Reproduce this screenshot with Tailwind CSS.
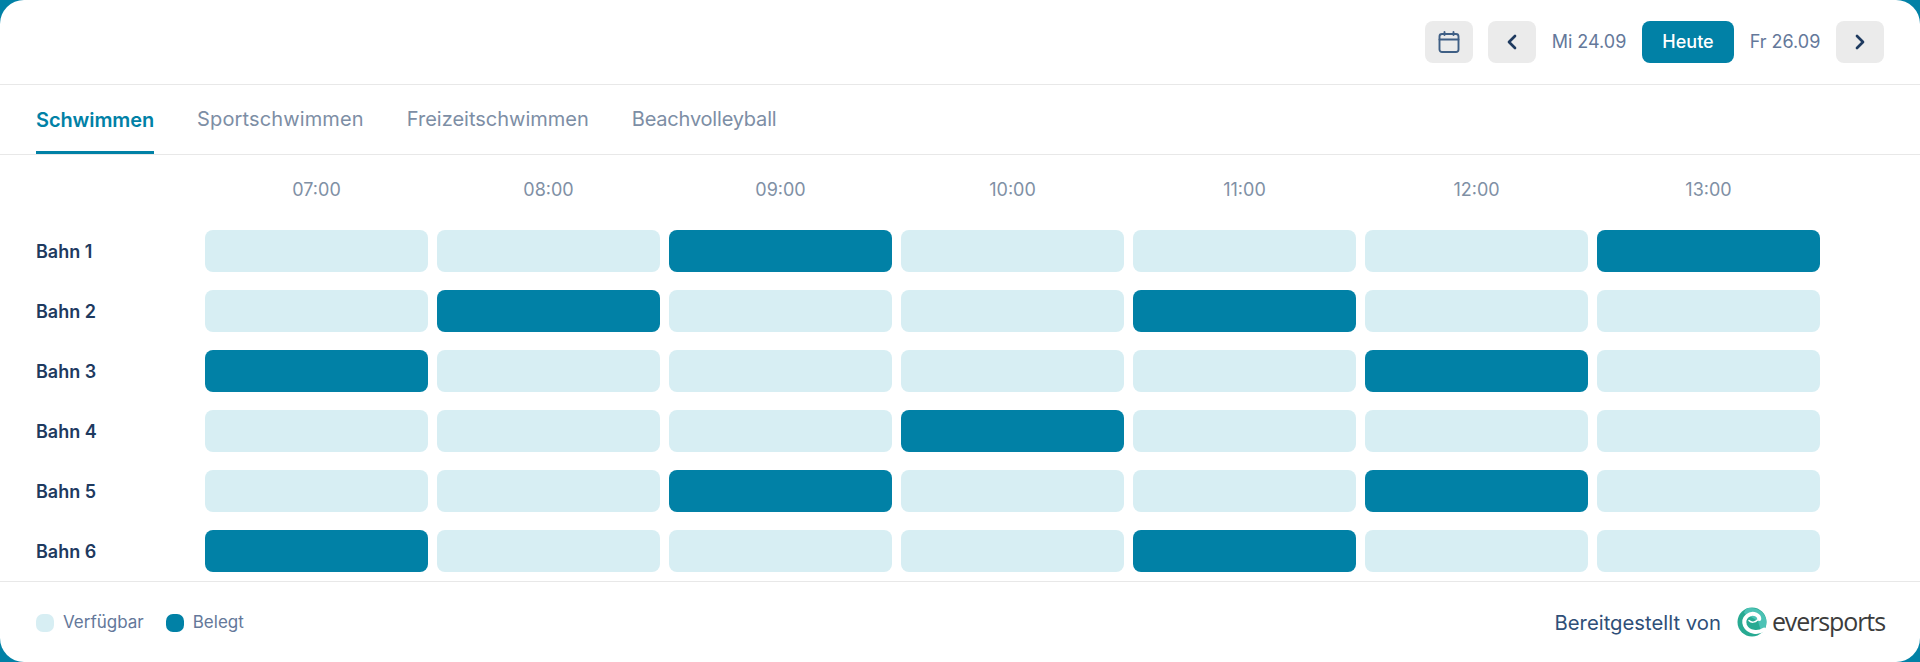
<!DOCTYPE html>
<html lang="de">
<head>
    <meta charset="UTF-8">
    <meta name="viewport" content="width=device-width, initial-scale=1.0">
    <title>Belegung</title>
    <script src="https://cdn.jsdelivr.net/npm/@tailwindcss/browser@4"></script>
</head>
<body class="bg-[#0181a6] font-['Inter',sans-serif]">
    <div class="h-[662px] w-[1920px] bg-white rounded-[24px] flex flex-col overflow-hidden">

        <!-- Kopfzeile -->
        <header class="h-[85px] shrink-0 border-b border-[#e8e8e8] flex items-center justify-end pr-9 pb-px">
            <button class="w-12 h-[42px] rounded-lg bg-[#ebebeb] flex items-center justify-center">
                <svg class="w-[22px] h-[22px] text-[#3f5f85]" viewBox="0 0 22 22" fill="none" stroke="currentColor" stroke-width="1.9" stroke-linecap="round" stroke-linejoin="round">
                    <rect x="1.500" y="3" width="19" height="18" rx="2.500"/>
                    <path d="M1.500 8.500h19M6.500 1v3M15.500 1v3"/>
                </svg>
            </button>
            <button class="ml-[15px] w-12 h-[42px] rounded-lg bg-[#ebebeb] flex items-center justify-center">
                <svg class="w-4 h-4 text-[#1e3a5f]" viewBox="0 0 16 16" fill="none" stroke="currentColor" stroke-width="2.700" stroke-linecap="round" stroke-linejoin="round"><path d="M11 2 5 8l6 6"/></svg>
            </button>
            <span class="w-[106px] text-center text-[18px] text-[#64789a]">Mi 24.09</span>
            <button class="w-[92px] h-[42px] rounded-lg bg-[#0181a6] text-white text-[18px] font-medium">Heute</button>
            <span class="w-[102px] text-center text-[18px] text-[#64789a]">Fr 26.09</span>
            <button class="w-12 h-[42px] rounded-lg bg-[#ebebeb] flex items-center justify-center">
                <svg class="w-4 h-4 text-[#1e3a5f]" viewBox="0 0 16 16" fill="none" stroke="currentColor" stroke-width="2.700" stroke-linecap="round" stroke-linejoin="round"><path d="m5 2 6 6-6 6"/></svg>
            </button>
        </header>

        <!-- Tabs -->
        <nav class="h-[70px] shrink-0 border-b border-[#e8e8e8] flex gap-[43px] pl-9 text-[20px] text-[#7d8ea5]">
            <a class="h-[69px] flex items-center border-b-[3px] border-[#0181a6] pt-[3px] font-semibold tracking-[-0.1px] text-[#0181a6]">Schwimmen</a>
            <a class="h-[69px] flex items-center pb-px tracking-[0.13px]">Sportschwimmen</a>
            <a class="h-[69px] flex items-center pb-px">Freizeitschwimmen</a>
            <a class="h-[69px] flex items-center pb-px tracking-[-0.2px]">Beachvolleyball</a>
        </nav>

        <!-- Belegungsplan -->
        <main class="flex-1 pl-9">
            <div class="grid grid-cols-[160px_repeat(7,223px)] gap-x-[9px] gap-y-[18px] items-center">
                <div class="h-[57px]"></div>
                <div class="h-[57px] pt-[24px] text-center text-[18px] leading-[22px] text-[#8090a5]">07:00</div>
                <div class="h-[57px] pt-[24px] text-center text-[18px] leading-[22px] text-[#8090a5]">08:00</div>
                <div class="h-[57px] pt-[24px] text-center text-[18px] leading-[22px] text-[#8090a5]">09:00</div>
                <div class="h-[57px] pt-[24px] text-center text-[18px] leading-[22px] text-[#8090a5]">10:00</div>
                <div class="h-[57px] pt-[24px] text-center text-[18px] leading-[22px] text-[#8090a5]">11:00</div>
                <div class="h-[57px] pt-[24px] text-center text-[18px] leading-[22px] text-[#8090a5]">12:00</div>
                <div class="h-[57px] pt-[24px] text-center text-[18px] leading-[22px] text-[#8090a5]">13:00</div>

                <div class="text-[18px] font-semibold text-[#1e3a5f]">Bahn 1</div>
                <div class="h-[42px] rounded-lg bg-[#d7eef3]"></div>
                <div class="h-[42px] rounded-lg bg-[#d7eef3]"></div>
                <div class="h-[42px] rounded-lg bg-[#0181a6]"></div>
                <div class="h-[42px] rounded-lg bg-[#d7eef3]"></div>
                <div class="h-[42px] rounded-lg bg-[#d7eef3]"></div>
                <div class="h-[42px] rounded-lg bg-[#d7eef3]"></div>
                <div class="h-[42px] rounded-lg bg-[#0181a6]"></div>

                <div class="text-[18px] font-semibold text-[#1e3a5f]">Bahn 2</div>
                <div class="h-[42px] rounded-lg bg-[#d7eef3]"></div>
                <div class="h-[42px] rounded-lg bg-[#0181a6]"></div>
                <div class="h-[42px] rounded-lg bg-[#d7eef3]"></div>
                <div class="h-[42px] rounded-lg bg-[#d7eef3]"></div>
                <div class="h-[42px] rounded-lg bg-[#0181a6]"></div>
                <div class="h-[42px] rounded-lg bg-[#d7eef3]"></div>
                <div class="h-[42px] rounded-lg bg-[#d7eef3]"></div>

                <div class="text-[18px] font-semibold text-[#1e3a5f]">Bahn 3</div>
                <div class="h-[42px] rounded-lg bg-[#0181a6]"></div>
                <div class="h-[42px] rounded-lg bg-[#d7eef3]"></div>
                <div class="h-[42px] rounded-lg bg-[#d7eef3]"></div>
                <div class="h-[42px] rounded-lg bg-[#d7eef3]"></div>
                <div class="h-[42px] rounded-lg bg-[#d7eef3]"></div>
                <div class="h-[42px] rounded-lg bg-[#0181a6]"></div>
                <div class="h-[42px] rounded-lg bg-[#d7eef3]"></div>

                <div class="text-[18px] font-semibold text-[#1e3a5f]">Bahn 4</div>
                <div class="h-[42px] rounded-lg bg-[#d7eef3]"></div>
                <div class="h-[42px] rounded-lg bg-[#d7eef3]"></div>
                <div class="h-[42px] rounded-lg bg-[#d7eef3]"></div>
                <div class="h-[42px] rounded-lg bg-[#0181a6]"></div>
                <div class="h-[42px] rounded-lg bg-[#d7eef3]"></div>
                <div class="h-[42px] rounded-lg bg-[#d7eef3]"></div>
                <div class="h-[42px] rounded-lg bg-[#d7eef3]"></div>

                <div class="text-[18px] font-semibold text-[#1e3a5f]">Bahn 5</div>
                <div class="h-[42px] rounded-lg bg-[#d7eef3]"></div>
                <div class="h-[42px] rounded-lg bg-[#d7eef3]"></div>
                <div class="h-[42px] rounded-lg bg-[#0181a6]"></div>
                <div class="h-[42px] rounded-lg bg-[#d7eef3]"></div>
                <div class="h-[42px] rounded-lg bg-[#d7eef3]"></div>
                <div class="h-[42px] rounded-lg bg-[#0181a6]"></div>
                <div class="h-[42px] rounded-lg bg-[#d7eef3]"></div>

                <div class="text-[18px] font-semibold text-[#1e3a5f]">Bahn 6</div>
                <div class="h-[42px] rounded-lg bg-[#0181a6]"></div>
                <div class="h-[42px] rounded-lg bg-[#d7eef3]"></div>
                <div class="h-[42px] rounded-lg bg-[#d7eef3]"></div>
                <div class="h-[42px] rounded-lg bg-[#d7eef3]"></div>
                <div class="h-[42px] rounded-lg bg-[#0181a6]"></div>
                <div class="h-[42px] rounded-lg bg-[#d7eef3]"></div>
                <div class="h-[42px] rounded-lg bg-[#d7eef3]"></div>
            </div>
        </main>

        <!-- Fusszeile -->
        <footer class="h-[81px] shrink-0 border-t border-[#e8e8e8] flex items-center justify-between pl-9 pr-[35px] pt-[2px]">
            <div class="flex items-center text-[17px] text-[#64789a]">
                <span class="w-[18px] h-[18px] rounded-[7px] bg-[#d7eef3]"></span>
                <span class="ml-[9px]">Verfügbar</span>
                <span class="ml-[22px] w-[18px] h-[18px] rounded-[7px] bg-[#0181a6]"></span>
                <span class="ml-[9px]">Belegt</span>
            </div>
            <div class="flex items-center">
                <span class="text-[20.3px] text-[#2f4f78]">Bereitgestellt von</span>
                <svg class="ml-4 w-[30px] h-[30px] -translate-y-px" viewBox="0 0 30 30" fill="none">
                    <circle cx="15" cy="15" r="14.500" fill="#28aa92"/>
                    <path d="M10 1.500C18-.5 27 4 29 12c1.200 5-.5 10.500-4.500 14L21 14 7 6c.5-2 1.500-4 3-4.500z" fill="#4cc2b5"/>
                    <path d="M27 22.500C21.500 26.500 11.500 26 8 18.500 5 10.500 13 5 19 7.500c2 .9 3.300 2.500 3.300 4.500" stroke="#fff" stroke-width="4" stroke-linecap="round"/>
                    <path d="M12 13.500c2.500 2.500 6 2 8.500-.5" stroke="#fff" stroke-width="1.500" stroke-linecap="round"/>
                </svg>
                <span class="ml-[5px] pb-[3px] text-[25px] font-medium font-['Open_Sans',sans-serif] tracking-[-1.1px] text-[#3c3c3c]">eversports</span>
            </div>
        </footer>
    </div>
</body>
</html>
